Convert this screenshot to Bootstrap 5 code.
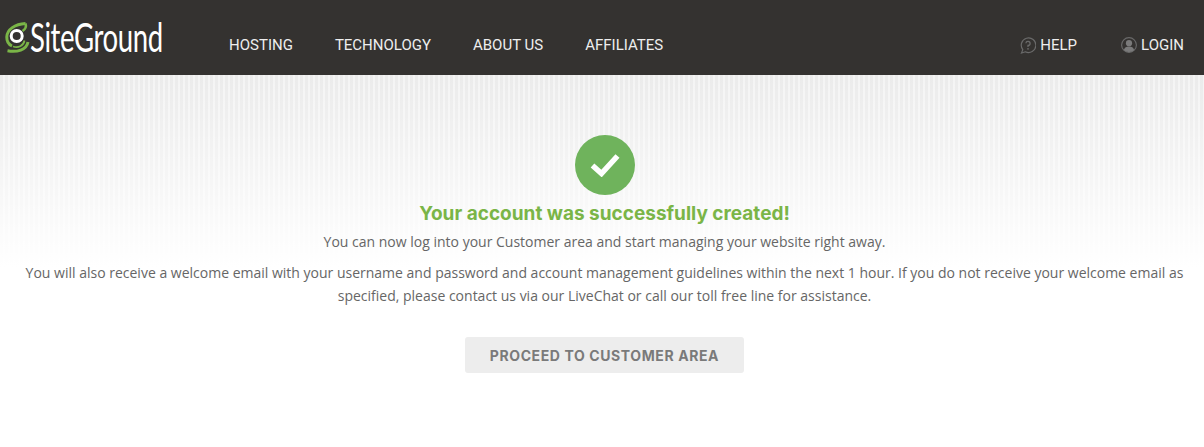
<!DOCTYPE html>
<html lang="en">
<head>
  <meta charset="UTF-8">
  <meta name="viewport" content="width=device-width, initial-scale=1.0">
  <title>SiteGround</title>
  <link href="https://cdn.jsdelivr.net/npm/bootstrap@5.3.2/dist/css/bootstrap.min.css" rel="stylesheet">
  <style>
    body {
      font-family: "Open Sans", sans-serif;
      font-size: 14px;
      color: #666;
      background: #fff;
    }

    .top-bar {
      height: 75px;
      background-color: #343230;
      padding: 0 20px 0 4px;
    }

    .brand-box {
      width: 225px;
      padding-bottom: 2px;
    }

    .brand-name {
      display: inline-block;
      font-family: "Lato", sans-serif;
      font-size: 33px;
      font-weight: 400;
      line-height: 1;
      color: #fff;
      letter-spacing: -0.5px;
      transform: scale(.835, 1.2);
      transform-origin: left center;
    }

    .top-link {
      font-family: "Roboto", sans-serif;
      font-size: 15px;
      font-weight: 400;
      color: #eee;
      text-decoration: none;
    }

    .main-links { gap: 42px; padding-top: 15px; }
    .side-links { gap: 44px; padding-top: 15px; }
    .side-links .top-link { gap: 4px; }

    .stripe-area {
      height: 372px;
      padding: 60px 20px 0 25px;
      background:
        linear-gradient(to bottom, rgba(255,255,255,0) 0, #fff 192px),
        repeating-linear-gradient(to right, #ebebeb 0, #ebebeb 3px, #f4f4f4 3px, #f4f4f4 5px);
    }

    .tick-circle {
      width: 60px;
      height: 60px;
      background-color: #6fb35c;
    }

    .done-title {
      font-family: "Inter", sans-serif;
      font-size: 19px;
      font-weight: 700;
      color: #7ab547;
      line-height: 26px;
      margin: 6px 0 3px;
    }

    .done-text {
      line-height: 23px;
      margin-bottom: 8px;
    }

    .proceed-btn {
      font-family: "Inter", sans-serif;
      font-size: 14px;
      font-weight: 700;
      letter-spacing: .6px;
      color: #7a7a7a;
      background-color: #ededed;
      border: 0;
      border-radius: 3px;
      width: 279px;
      height: 36px;
      margin-top: 22px;
      padding: 0;
    }
  </style>
</head>
<body>

  <nav class="top-bar d-flex align-items-center">
    <div class="brand-box d-flex align-items-center">
      <svg width="26" height="32" viewBox="0 0 26 32" fill="none">
        <path d="M21.500 2.500C11 3 3 8.500 2.800 16c-.1 4 2 7.500 5.200 9" stroke="#7ab547" stroke-width="3"/>
        <path d="M21.500 2.500c1 3-.5 6-3 7.500" stroke="#7ab547" stroke-width="2.500"/>
        <path d="M3.500 29.800C13 31.500 22.500 29 24 21" stroke="#7ab547" stroke-width="3"/>
        <path d="M9 25.500c5 2 10.500-.5 11.500-6" stroke="#7ab547" stroke-width="1.800"/>
        <circle cx="12.700" cy="15" r="5.500" stroke="#fff" stroke-width="3"/>
      </svg>
      <span class="brand-name">SiteGround</span>
    </div>
    <div class="main-links d-flex flex-grow-1">
      <a class="top-link" href="#">HOSTING</a>
      <a class="top-link" href="#">TECHNOLOGY</a>
      <a class="top-link" href="#">ABOUT US</a>
      <a class="top-link" href="#">AFFILIATES</a>
    </div>
    <div class="side-links d-flex">
      <a class="top-link d-flex align-items-center" href="#">
        <svg width="16" height="17" viewBox="0 0 16 17" fill="none">
          <path d="M2.800 12.700A7.300 7.300 0 1 1 5.400 14.800L1.500 16z" stroke="#6a6a6a" stroke-width="1.200"/>
          <path d="M5.900 6.200A2.100 2.100 0 1 1 8 8.500v1.500" stroke="#6a6a6a" stroke-width="1.300"/>
          <circle cx="8" cy="11.800" r=".9" fill="#6a6a6a"/>
        </svg>
        HELP
      </a>
      <a class="top-link d-flex align-items-center" href="#">
        <svg width="16" height="16" viewBox="0 0 16 16" fill="none">
          <circle cx="8" cy="8" r="7.400" stroke="#6a6a6a" stroke-width="1.100"/>
          <circle cx="8" cy="6.200" r="3.100" fill="#7a7a7a"/>
          <path d="M2.800 13c.6-2.600 2.600-3.600 5.200-3.600s4.600 1 5.200 3.600A7 7 0 0 1 8 15a7 7 0 0 1-5.200-2z" fill="#7a7a7a"/>
        </svg>
        LOGIN
      </a>
    </div>
  </nav>

  <main class="stripe-area text-center">
    <div class="tick-circle rounded-circle d-flex align-items-center justify-content-center mx-auto">
      <svg width="30" height="24" viewBox="0 0 30 24" fill="none">
        <path d="M2.500 12.500L11.500 20.500 27.500 3" stroke="#fff" stroke-width="5.500"/>
      </svg>
    </div>
    <h1 class="done-title">Your account was successfully created!</h1>
    <p class="done-text">You can now log into your Customer area and start managing your website right away.</p>
    <p class="done-text">You will also receive a welcome email with your username and password and account management guidelines within the next 1 hour. If you do not receive your welcome email as specified, please contact us via our LiveChat or call our toll free line for assistance.</p>
    <button type="button" class="btn proceed-btn">PROCEED TO CUSTOMER AREA</button>
  </main>

  <script src="https://cdn.jsdelivr.net/npm/bootstrap@5.3.2/dist/js/bootstrap.bundle.min.js"></script>
</body>
</html>
